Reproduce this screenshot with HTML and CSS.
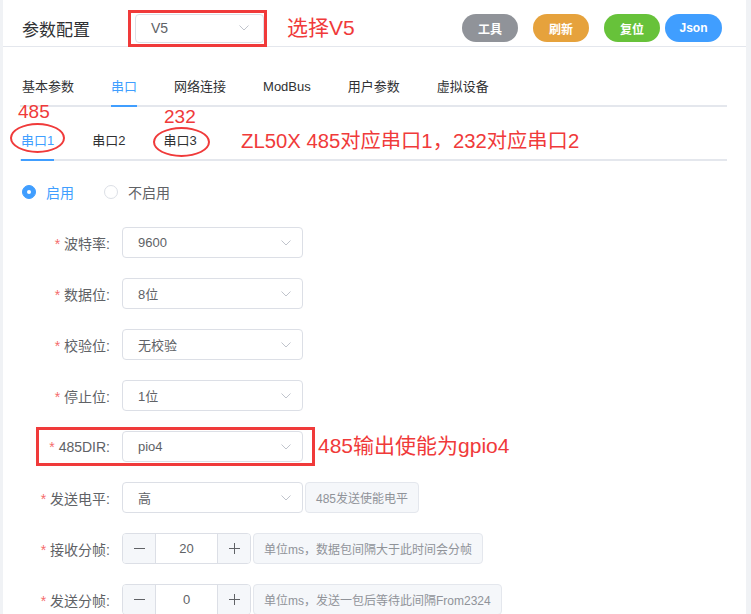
FILE: index.html
```html
<!DOCTYPE html>
<html lang="zh-CN">
<head>
  <meta charset="UTF-8">
  <title>参数配置</title>
  <link rel="stylesheet" href="styles.css">
</head>
<body>
  <div class="page">

    <header class="topbar">
      <span class="title">参数配置</span>
      <div class="ver-select">
        <span>V5</span>
        <svg class="arrow" width="10" height="6" viewBox="0 0 10 6"><polyline points="0.5,0.5 5,5 9.5,0.5" fill="none" stroke="#c0c4cc" stroke-width="1"/></svg>
      </div>
      <div class="actions">
        <button class="btn gray">工具</button>
        <button class="btn orange">刷新</button>
        <button class="btn green">复位</button>
        <button class="btn blue json">Json</button>
      </div>
    </header>

    <div class="content">
      <div class="tabs main-tabs">
        <span class="tab">基本参数</span>
        <span class="tab active">串口</span>
        <span class="tab">网络连接</span>
        <span class="tab">ModBus</span>
        <span class="tab">用户参数</span>
        <span class="tab">虚拟设备</span>
      </div>

      <div class="tabs sub-tabs">
        <span class="tab active">串口1</span>
        <span class="tab">串口2</span>
        <span class="tab">串口3</span>
      </div>

      <div class="radios">
        <span class="radio checked"><i class="radio-dot"></i>启用</span>
        <span class="radio"><i class="radio-dot"></i>不启用</span>
      </div>

      <div class="form">
        <div class="form-item">
          <label class="form-label"><span class="req">*</span>波特率:</label>
          <div class="select"><span>9600</span><svg class="arrow" width="10" height="6" viewBox="0 0 10 6"><polyline points="0.5,0.5 5,5 9.5,0.5" fill="none" stroke="#c0c4cc" stroke-width="1"/></svg></div>
        </div>
        <div class="form-item">
          <label class="form-label"><span class="req">*</span>数据位:</label>
          <div class="select"><span>8位</span><svg class="arrow" width="10" height="6" viewBox="0 0 10 6"><polyline points="0.5,0.5 5,5 9.5,0.5" fill="none" stroke="#c0c4cc" stroke-width="1"/></svg></div>
        </div>
        <div class="form-item">
          <label class="form-label"><span class="req">*</span>校验位:</label>
          <div class="select"><span>无校验</span><svg class="arrow" width="10" height="6" viewBox="0 0 10 6"><polyline points="0.5,0.5 5,5 9.5,0.5" fill="none" stroke="#c0c4cc" stroke-width="1"/></svg></div>
        </div>
        <div class="form-item">
          <label class="form-label"><span class="req">*</span>停止位:</label>
          <div class="select"><span>1位</span><svg class="arrow" width="10" height="6" viewBox="0 0 10 6"><polyline points="0.5,0.5 5,5 9.5,0.5" fill="none" stroke="#c0c4cc" stroke-width="1"/></svg></div>
        </div>
        <div class="form-item">
          <label class="form-label"><span class="req">*</span>485DIR:</label>
          <div class="select"><span>pio4</span><svg class="arrow" width="10" height="6" viewBox="0 0 10 6"><polyline points="0.5,0.5 5,5 9.5,0.5" fill="none" stroke="#c0c4cc" stroke-width="1"/></svg></div>
        </div>
        <div class="form-item">
          <label class="form-label"><span class="req">*</span>发送电平:</label>
          <div class="select"><span>高</span><svg class="arrow" width="10" height="6" viewBox="0 0 10 6"><polyline points="0.5,0.5 5,5 9.5,0.5" fill="none" stroke="#c0c4cc" stroke-width="1"/></svg></div>
          <span class="addon">485发送使能电平</span>
        </div>
        <div class="form-item">
          <label class="form-label"><span class="req">*</span>接收分帧:</label>
          <div class="number">
            <span class="step minus"><svg width="11" height="11" viewBox="0 0 11 11"><line x1="0" y1="5.5" x2="11" y2="5.5" stroke="#606266" stroke-width="1"/></svg></span>
            <span class="value">20</span>
            <span class="step plus"><svg width="11" height="11" viewBox="0 0 11 11"><line x1="0" y1="5.5" x2="11" y2="5.5" stroke="#606266" stroke-width="1"/><line x1="5.5" y1="0" x2="5.5" y2="11" stroke="#606266" stroke-width="1"/></svg></span>
          </div>
          <span class="addon">单位ms，数据包间隔大于此时间会分帧</span>
        </div>
        <div class="form-item">
          <label class="form-label"><span class="req">*</span>发送分帧:</label>
          <div class="number">
            <span class="step minus"><svg width="11" height="11" viewBox="0 0 11 11"><line x1="0" y1="5.5" x2="11" y2="5.5" stroke="#606266" stroke-width="1"/></svg></span>
            <span class="value">0</span>
            <span class="step plus"><svg width="11" height="11" viewBox="0 0 11 11"><line x1="0" y1="5.5" x2="11" y2="5.5" stroke="#606266" stroke-width="1"/><line x1="5.5" y1="0" x2="5.5" y2="11" stroke="#606266" stroke-width="1"/></svg></span>
          </div>
          <span class="addon">单位ms，发送一包后等待此间隔From2324</span>
        </div>
      </div>
    </div>

    <!-- red annotations drawn over the screenshot -->
    <div class="mark-box ver-mark"></div>
    <span class="mark-text ver-note">选择V5</span>
    <span class="mark-text num485">485</span>
    <span class="mark-text num232">232</span>
    <div class="mark-ring ring1"></div>
    <div class="mark-ring ring3"></div>
    <span class="mark-text port-note">ZL50X 485对应串口1，232对应串口2</span>
    <div class="mark-box dir-mark"></div>
    <span class="mark-text dir-note">485输出使能为gpio4</span>

  </div>
</body>
</html>
```

FILE: styles.css
```css
* { box-sizing: border-box; margin: 0; padding: 0; }
body { background: #f0f2f5; font-family: "Liberation Sans", "Noto Sans CJK SC", sans-serif; color: #606266; }
.page { position: relative; margin-left: 3px; width: 743px; height: 614px; background: #fff; overflow: hidden; }

.topbar { display: flex; align-items: center; height: 47px; padding: 10px 24px 0 19px; border-bottom: 1px solid #e4e7ed; }
.title { width: 113px; font-size: 17px; color: #303133; }
.ver-select { display: flex; align-items: center; justify-content: space-between; width: 129px; height: 29px; padding: 0 14px 0 15px; border: 1px solid #dcdfe6; border-radius: 4px; font-size: 14px; color: #606266; }
.actions { margin-left: auto; display: flex; }
.btn { width: 56px; height: 28px; border: none; border-radius: 14px; color: #fff; font: bold 12px "Liberation Sans", "Noto Sans CJK SC", sans-serif; }
.btn + .btn { margin-left: 15px; }
.btn.json { margin-left: 5px; width: 57px; }
.gray { background: #909399; }
.orange { background: #e6a23c; }
.green { background: #67c23a; }
.blue { background: #409eff; }

.content { padding: 0 19px 0 17px; }
.tabs { display: flex; height: 38px; border-bottom: 2px solid #e4e7ed; font-size: 13px; color: #303133; }
.main-tabs { margin-top: 22px; gap: 37px; padding-left: 2px; }
.sub-tabs { margin-top: 16px; gap: 38px; padding-left: 1px; }
.tab { position: relative; line-height: 36px; }
.tab.active { color: #409eff; }
.tab.active::after { content: ''; position: absolute; left: 0; right: 0; bottom: -2px; height: 2px; background: #409eff; }

.radios { display: flex; align-items: center; margin-top: 21px; height: 20px; padding-left: 2px; font-size: 14px; }
.radio { display: flex; align-items: center; gap: 10px; margin-right: 30px; color: #606266; }
.radio-dot { display: flex; align-items: center; justify-content: center; width: 14px; height: 14px; border: 1px solid #dcdfe6; border-radius: 50%; background: #fff; }
.radio.checked { color: #409eff; }
.radio.checked .radio-dot { background: #409eff; border-color: #409eff; }
.radio.checked .radio-dot::after { content: ''; width: 4px; height: 4px; border-radius: 50%; background: #fff; }

.form { margin-top: 25px; }
.form-item { display: flex; align-items: center; height: 31px; margin-bottom: 20px; }
.form-label { width: 102px; padding-right: 12px; text-align: right; font-size: 14px; color: #606266; }
.req { color: #f56c6c; margin-right: 4px; }
.select { display: flex; align-items: center; justify-content: space-between; width: 181px; height: 31px; padding: 0 11px 0 15px; border: 1px solid #dcdfe6; border-radius: 4px; font-size: 13px; color: #606266; }
.addon { display: flex; align-items: center; height: 31px; margin-left: 2px; padding: 0 10px; background: #f5f7fa; border: 1px solid #e4e7ed; border-radius: 4px; font-size: 12px; color: #909399; white-space: nowrap; }
.number { display: flex; width: 129px; height: 31px; border: 1px solid #dcdfe6; border-radius: 4px; overflow: hidden; }
.step { display: flex; align-items: center; justify-content: center; width: 33px; background: #f5f7fa; }
.minus { border-right: 1px solid #dcdfe6; }
.plus { border-left: 1px solid #dcdfe6; }
.value { flex: 1; text-align: center; line-height: 29px; font-size: 13px; color: #606266; }

.mark-box { position: absolute; border: 3px solid #f03a3a; }
.mark-ring { position: absolute; border: 2.5px solid #f03a3a; border-radius: 50%; }
.mark-text { position: absolute; color: #f03a3a; font-size: 20px; line-height: 24px; white-space: nowrap; }
.ver-mark { left: 125px; top: 10px; width: 139px; height: 37px; }
.ver-note { left: 284px; top: 16px; font-size: 21px; }
.num485 { left: 15px; top: 102px; font-size: 19px; line-height: 20px; }
.num232 { left: 161px; top: 107px; font-size: 19px; line-height: 20px; }
.ring1 { left: 7px; top: 123px; width: 55px; height: 30px; }
.ring3 { left: 150px; top: 127px; width: 57px; height: 30px; }
.port-note { left: 238px; top: 129px; font-size: 20.3px; }
.dir-mark { left: 33px; top: 427px; width: 279px; height: 39px; }
.dir-note { left: 315px; top: 434px; font-size: 21px; }
```
